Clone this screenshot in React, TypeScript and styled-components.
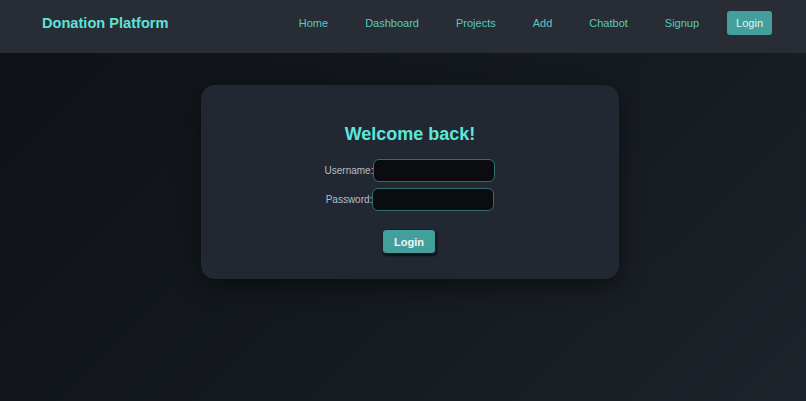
import styled, { createGlobalStyle } from "styled-components";

const GlobalStyle = createGlobalStyle`
    html, body {
        margin: 0;
        padding: 0;
        height: 100%;
    }
    body {
        font-family: "Liberation Sans", Arial, sans-serif;
        background: linear-gradient(135deg, #0e1115 0%, #151a20 55%, #1e232b 100%);
        min-height: 401px;
    }
    * {
        box-sizing: border-box;
    }
`;

const Page = styled.div`
    min-height: 401px;
    display: flex;
    flex-direction: column;
`;

const Header = styled.header`
    height: 53px;
    background-color: #282c34;
    display: flex;
    align-items: center;
    justify-content: space-between;
    padding: 0 34px 7px 42px;
`;

const Brand = styled.div`
    font-size: 14.6px;
    font-weight: bold;
    color: #5ee2d8;
`;

const Nav = styled.nav`
    display: flex;
    align-items: center;
    gap: 19px;
`;

const NavLink = styled.a<{ $active?: boolean }>`
    display: flex;
    align-items: center;
    height: 24px;
    padding: 0 9px;
    font-size: 11px;
    text-decoration: none;
    border-radius: 3px;
    color: ${(p) => (p.$active ? "#e6f4f3" : "#5ac9c0")};
    background-color: ${(p) => (p.$active ? "#429f9b" : "transparent")};
    cursor: pointer;
`;

const Main = styled.main`
    display: flex;
    justify-content: center;
    padding: 32px 0 0 14px;
`;

const Card = styled.div`
    width: 418px;
    background-color: #212832;
    border-radius: 14px;
    padding: 24px 0 25px;
    box-shadow: 0 8px 24px rgba(0, 0, 0, 0.45);
    display: flex;
    flex-direction: column;
    align-items: center;
`;

const Title = styled.h2`
    margin: 14px 0;
    font-size: 18px;
    line-height: 22px;
    font-weight: bold;
    color: #5fe6dc;
`;

const Form = styled.form`
    display: flex;
    flex-direction: column;
    align-items: center;
    gap: 6px;
`;

const Row = styled.div`
    display: flex;
    align-items: center;
`;

const Label = styled.label`
    font-size: 10px;
    color: #b9bdc4;
`;

const Input = styled.input`
    width: 122px;
    height: 23px;
    background-color: #0a0c0f;
    border: 1px solid #2f716c;
    border-radius: 6px;
    color: #d0d4d8;
    padding: 0 6px;
    outline: none;
`;

const Submit = styled.button`
    margin: 12px 0 0 -2px;
    width: 54px;
    height: 25px;
    background-color: #429f9b;
    color: #eef7f6;
    font-family: "Liberation Sans", Arial, sans-serif;
    font-size: 11px;
    font-weight: bold;
    border: 1px solid #1a1f24;
    border-radius: 4px;
    box-shadow: 1px 2px 2px rgba(0, 0, 0, 0.6);
    cursor: pointer;
`;

const links = ["Home", "Dashboard", "Projects", "Add", "Chatbot", "Signup"];

export default function App() {
    return (
        <Page>
            <GlobalStyle />
            <Header>
                <Brand>Donation Platform</Brand>
                <Nav>
                    {links.map((l) => (
                        <NavLink key={l}>{l}</NavLink>
                    ))}
                    <NavLink $active>Login</NavLink>
                </Nav>
            </Header>
            <Main>
                <Card>
                    <Title>Welcome back!</Title>
                    <Form onSubmit={(e) => e.preventDefault()}>
                        <Row>
                            <Label htmlFor="username">Username:</Label>
                            <Input id="username" type="text" />
                        </Row>
                        <Row>
                            <Label htmlFor="password">Password:</Label>
                            <Input id="password" type="password" />
                        </Row>
                        <Submit type="submit">Login</Submit>
                    </Form>
                </Card>
            </Main>
        </Page>
    );
}
